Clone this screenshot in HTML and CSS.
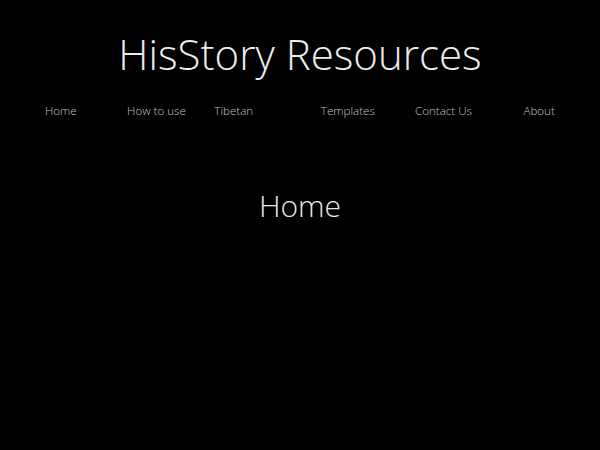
FILE: index.html
```html
<!DOCTYPE html>
<html>
<head>
<meta charset="utf-8">
<title>HisStory Resources</title>
<link rel="stylesheet" href="styles.css">
</head>
<body>
<header class="site-header">
  <h1 class="site-title">HisStory Resources</h1>
  <nav class="nav">
    <a class="nav-item" href="#">Home</a>
    <a class="nav-item" href="#">How to use</a>
    <a class="nav-item nav-item-left" href="#">Tibetan</a>
    <a class="nav-item" href="#">Templates</a>
    <a class="nav-item" href="#">Contact Us</a>
    <a class="nav-item" href="#">About</a>
  </nav>
</header>
<main class="content">
  <h2 class="page-title">Home</h2>
</main>
</body>
</html>
```

FILE: styles.css
```css
html, body {
  margin: 0;
  padding: 0;
  background: #000;
  height: 100%;
}
body {
  font-family: "Open Sans", "Liberation Sans", sans-serif;
  color: #eee;
}
.site-header {
  display: flex;
  flex-direction: column;
  align-items: center;
}
.site-title {
  margin: 26px 0 0;
  font-size: 42px;
  font-weight: 300;
  line-height: 56px;
  color: #ececec;
}
.nav {
  display: grid;
  grid-template-columns: repeat(6, 1fr);
  width: 574px;
  margin-top: 20px;
}
.nav-item {
  text-align: center;
  font-size: 11.6px;
  font-weight: 300;
  line-height: 17px;
  color: #c4c4c4;
  text-decoration: none;
}
.nav-item-left {
  text-align: left;
  padding-left: 10px;
}
.content {
  display: flex;
  justify-content: center;
}
.page-title {
  margin: 67px 0 0;
  font-size: 30px;
  font-weight: 300;
  line-height: 40px;
  color: #e8e8e8;
}
```
